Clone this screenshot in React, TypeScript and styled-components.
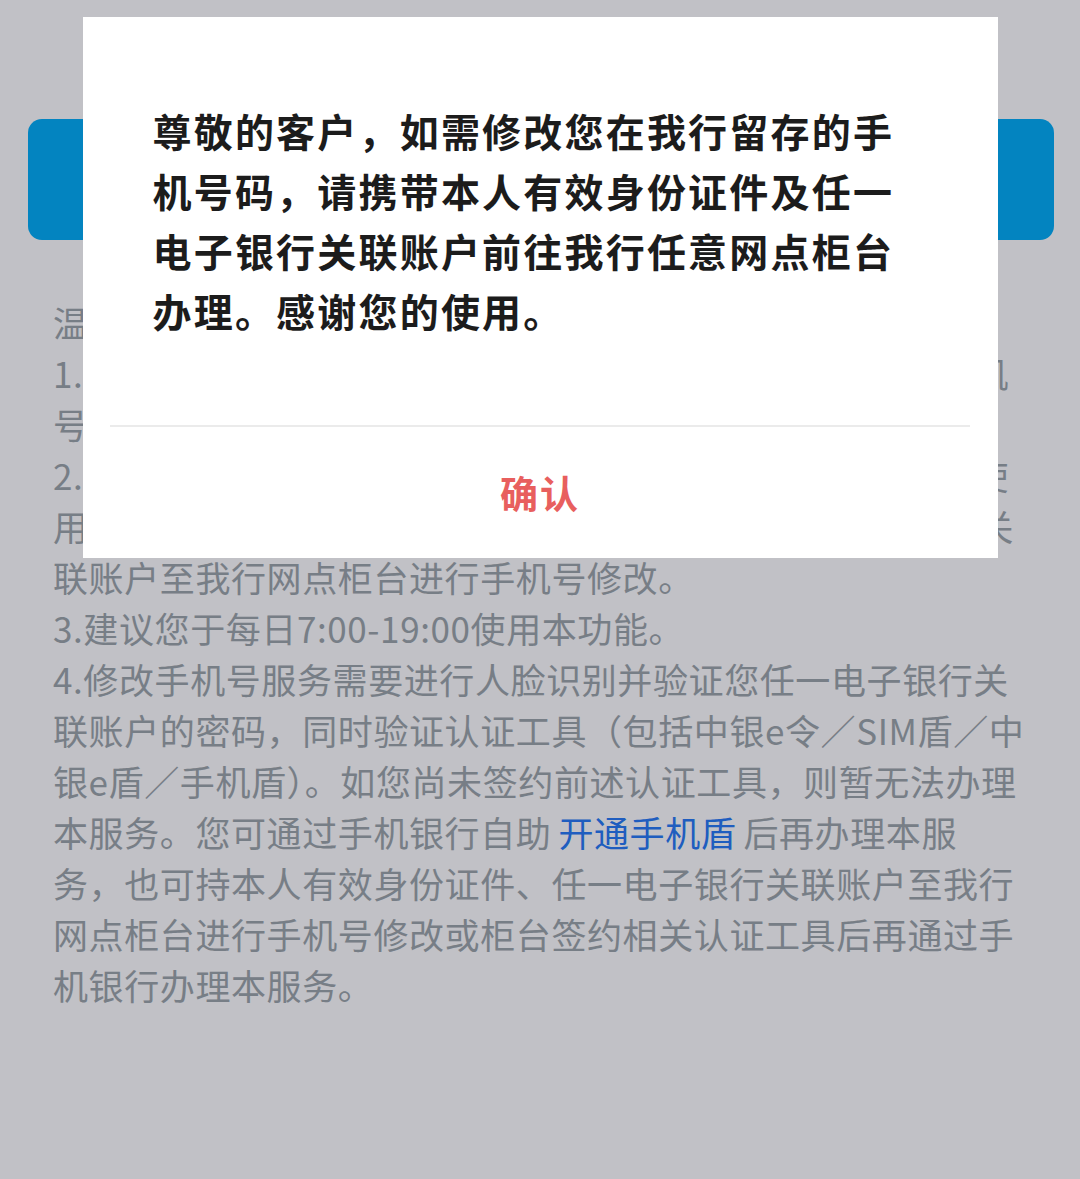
import React from "react";
import styled, { createGlobalStyle } from "styled-components";

const GlobalStyle = createGlobalStyle`
  html, body {
    margin: 0;
    padding: 0;
    background: #ffffff;
  }
  body {
    font-family: "Noto Sans CJK SC", "Noto Sans", sans-serif;
  }
`;

// page under the modal
const Page = styled.div`
  min-height: 1179px;
  box-sizing: border-box;
  padding-top: 119px;
  background: #ffffff;
`;

const PrimaryButton = styled.div`
  height: 121px;
  margin: 0 26px 0 28px;
  border-radius: 14px;
  background: #05aff8;
`;

const Notice = styled.div`
  padding: 56px 53px 0;
  color: #9ea7ab;
  font-size: 35px;
  letter-spacing: 0.6px;
  line-height: 51px;
`;

const NoticeLine = styled.div`
  white-space: nowrap;
`;

const LinkText = styled.span<{ $color: string }>`
  color: ${(p) => p.$color};
  margin: 0 7px;
`;

// modal
const Overlay = styled.div`
  position: fixed;
  inset: 0;
  background: rgba(2, 0, 20, 0.245);
  display: flex;
  justify-content: center;
  align-items: flex-start;
  padding-top: 17px;
`;

const Dialog = styled.div`
  width: 915px;
  background: #ffffff;
  display: flex;
  flex-direction: column;
`;

const Message = styled.div`
  padding: 83px 80px 0 70px;
  font-size: 39px;
  font-weight: 700;
  letter-spacing: 2.2px;
  line-height: 60px;
  color: #1c1c1c;
`;

const Divider = styled.div`
  height: 2px;
  margin: 85px 28px 0 27px;
  background: #ebebeb;
`;

const ConfirmButton = styled.button`
  height: 131px;
  padding-bottom: 4px;
  border: none;
  background: transparent;
  font-family: "Noto Sans CJK SC", sans-serif;
  font-size: 38px;
  font-weight: 700;
  letter-spacing: 2px;
  color: #e85f5e;
  cursor: pointer;
`;

const noticeLines: React.ReactNode[] = [
  "温馨提示：",
  "1.本功能仅支持修改您本人在我行电子银行渠道所留存的手机",
  "号码。",
  "2.若您原手机号已停用，或您无法通过本功能办理修改，可使",
  "用户持本人有效身份证件，并携带任一电子银行或手机银行关",
  "联账户至我行网点柜台进行手机号修改。",
  "3.建议您于每日7:00-19:00使用本功能。",
  "4.修改手机号服务需要进行人脸识别并验证您任一电子银行关",
  "联账户的密码，同时验证认证工具（包括中银e令／SIM盾／中",
  "银e盾／手机盾）。如您尚未签约前述认证工具，则暂无法办理",
  <>
    本服务。您可通过手机银行自助
    <LinkText $color="#2a7cf6">开通手机盾</LinkText>
    后再办理本服
  </>,
  "务，也可持本人有效身份证件、任一电子银行关联账户至我行",
  "网点柜台进行手机号修改或柜台签约相关认证工具后再通过手",
  "机银行办理本服务。",
];

const App: React.FC = () => {
  return (
    <>
      <GlobalStyle />
      <Page>
        <PrimaryButton />
        <Notice>
          {noticeLines.map((line, i) => (
            <NoticeLine key={i}>{line}</NoticeLine>
          ))}
        </Notice>
      </Page>

      <Overlay>
        <Dialog>
          <Message>
            尊敬的客户，如需修改您在我行留存的手机号码，请携带本人有效身份证件及任一电子银行关联账户前往我行任意网点柜台办理。感谢您的使用。
          </Message>
          <Divider />
          <ConfirmButton>确认</ConfirmButton>
        </Dialog>
      </Overlay>
    </>
  );
};

export default App;
